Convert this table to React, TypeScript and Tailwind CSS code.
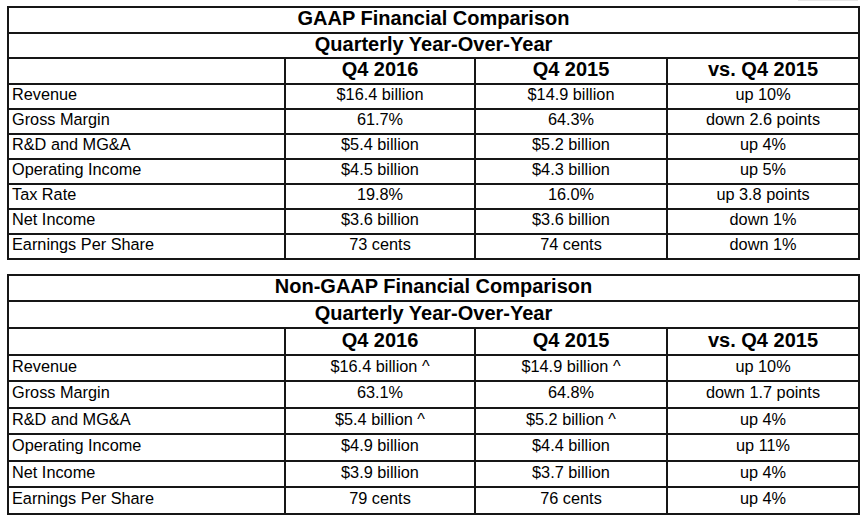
type Row = [string, string, string, string]

const gaapRows: Row[] = [
  ["Revenue", "$16.4 billion", "$14.9 billion", "up 10%"],
  ["Gross Margin", "61.7%", "64.3%", "down 2.6 points"],
  ["R&D and MG&A", "$5.4 billion", "$5.2 billion", "up 4%"],
  ["Operating Income", "$4.5 billion", "$4.3 billion", "up 5%"],
  ["Tax Rate", "19.8%", "16.0%", "up 3.8 points"],
  ["Net Income", "$3.6 billion", "$3.6 billion", "down 1%"],
  ["Earnings Per Share", "73 cents", "74 cents", "down 1%"],
]

const nonGaapRows: Row[] = [
  ["Revenue", "$16.4 billion ^", "$14.9 billion ^", "up 10%"],
  ["Gross Margin", "63.1%", "64.8%", "down 1.7 points"],
  ["R&D and MG&A", "$5.4 billion ^", "$5.2 billion ^", "up 4%"],
  ["Operating Income", "$4.9 billion", "$4.4 billion", "up 11%"],
  ["Net Income", "$3.9 billion", "$3.7 billion", "up 4%"],
  ["Earnings Per Share", "79 cents", "76 cents", "up 4%"],
]

function ComparisonTable({
  title,
  rows,
  headH,
  rowH,
}: {
  title: string
  rows: Row[]
  headH: string
  rowH: string
}) {
  const cell = "border-2 border-[#161616] p-0"
  return (
    <table className="w-[851px] table-fixed border-collapse text-black">
      <colgroup>
        <col className="w-[277px]" />
        <col className="w-[190px]" />
        <col className="w-[192px]" />
        <col className="w-[192px]" />
      </colgroup>
      <tbody>
        {/* Title rows */}
        <tr className={headH}>
          <td colSpan={4} className={`${cell} text-center text-[20px] font-bold leading-none pb-[3px]`}>
            {title}
          </td>
        </tr>
        <tr className={headH}>
          <td colSpan={4} className={`${cell} text-center text-[20px] font-bold leading-none pb-[3px]`}>
            Quarterly Year-Over-Year
          </td>
        </tr>
        <tr className={headH}>
          <td className={cell}></td>
          <td className={`${cell} text-center text-[20px] font-bold leading-none pb-[3px]`}>Q4 2016</td>
          <td className={`${cell} text-center text-[20px] font-bold leading-none pb-[3px]`}>Q4 2015</td>
          <td className={`${cell} text-center text-[20px] font-bold leading-none pb-[3px]`}>vs. Q4 2015</td>
        </tr>

        {/* Data rows */}
        {rows.map((r) => (
          <tr key={r[0]} className={rowH}>
            <td className={`${cell} pl-[3px] text-[16.3px] leading-none pb-[4px]`}>{r[0]}</td>
            <td className={`${cell} text-center text-[16.3px] leading-none pb-[4px]`}>{r[1]}</td>
            <td className={`${cell} text-center text-[16.3px] leading-none pb-[4px]`}>{r[2]}</td>
            <td className={`${cell} text-center text-[16.3px] leading-none pb-[4px]`}>{r[3]}</td>
          </tr>
        ))}
      </tbody>
    </table>
  )
}

export default function App() {
  return (
    <div className="w-[867px] h-[525px] bg-white font-['Liberation_Sans',Arial,sans-serif]">
      <div className="flex h-[1px]">
        <div className="ml-[798px] w-[60px] bg-[#e6e6e6]" />
      </div>
      <div className="flex flex-col gap-[14px] pl-[7px] pt-[5px]">
        <ComparisonTable title="GAAP Financial Comparison" rows={gaapRows} headH="h-[25.5px]" rowH="h-[25px]" />
        <ComparisonTable title="Non-GAAP Financial Comparison" rows={nonGaapRows} headH="h-[26.7px]" rowH="h-[26.5px]" />
      </div>
    </div>
  )
}
